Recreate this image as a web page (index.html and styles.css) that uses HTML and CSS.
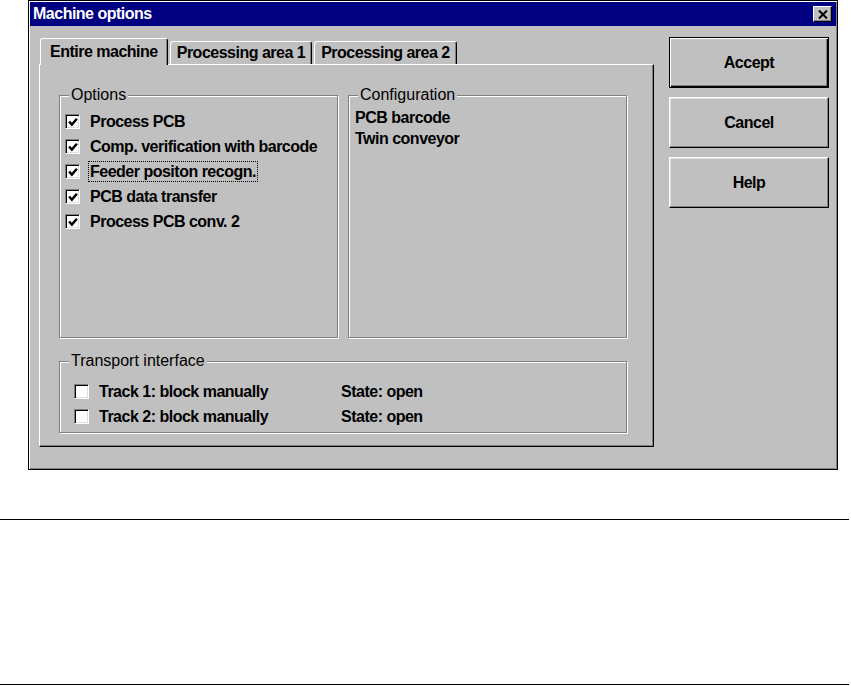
FILE: index.html
```html
<!DOCTYPE html>
<html lang="en">

<head>
    <meta charset="UTF-8">
    <title>Machine options</title>
    <link rel="stylesheet" href="styles.css">
</head>

<body>
    <div class="window">
        <!-- title bar -->
        <div class="titlebar">
            <span>Machine options</span>
            <div class="close">
                <svg width="10" height="9" viewBox="0 0 10 9">
                    <path d="M1 0.5 L9 8.5 M9 0.5 L1 8.5" stroke="#000" stroke-width="2" fill="none" />
                </svg>
            </div>
        </div>

        <div class="content">
            <div class="tabarea">
                <div class="tabs">
                    <div class="tab active">Entire machine</div>
                    <div class="tab">Processing area 1</div>
                    <div class="tab">Processing area 2</div>
                </div>
                <div class="panel">
                    <div class="groups">
                        <!-- options -->
                        <div class="group options">
                            <span class="group-title">Options</span>
                            <div class="check-row">
                                <span class="box"><svg class="tick" viewBox="0 0 9 9"><path d="M1 4 L3.5 6.8 L8 1.5" /></svg></span>
                                <span>Process PCB</span>
                            </div>
                            <div class="check-row">
                                <span class="box"><svg class="tick" viewBox="0 0 9 9"><path d="M1 4 L3.5 6.8 L8 1.5" /></svg></span>
                                <span>Comp. verification with barcode</span>
                            </div>
                            <div class="check-row">
                                <span class="box"><svg class="tick" viewBox="0 0 9 9"><path d="M1 4 L3.5 6.8 L8 1.5" /></svg></span>
                                <span class="focus">Feeder positon recogn.</span>
                            </div>
                            <div class="check-row">
                                <span class="box"><svg class="tick" viewBox="0 0 9 9"><path d="M1 4 L3.5 6.8 L8 1.5" /></svg></span>
                                <span>PCB data transfer</span>
                            </div>
                            <div class="check-row">
                                <span class="box"><svg class="tick" viewBox="0 0 9 9"><path d="M1 4 L3.5 6.8 L8 1.5" /></svg></span>
                                <span>Process PCB conv. 2</span>
                            </div>
                        </div>
                        <!-- configuration -->
                        <div class="group config">
                            <span class="group-title">Configuration</span>
                            <div class="config-line">PCB barcode</div>
                            <div class="config-line">Twin conveyor</div>
                        </div>
                    </div>
                    <!-- transport -->
                    <div class="group transport">
                        <span class="group-title">Transport interface</span>
                        <div class="track-row">
                            <div class="check-row"><span class="box"></span><span>Track 1: block manually</span></div>
                            <span>State: open</span>
                        </div>
                        <div class="track-row">
                            <div class="check-row"><span class="box"></span><span>Track 2: block manually</span></div>
                            <span>State: open</span>
                        </div>
                    </div>
                </div>
            </div>

            <div class="buttons">
                <button class="btn default">Accept</button>
                <button class="btn">Cancel</button>
                <button class="btn">Help</button>
            </div>
        </div>
    </div>

    <div class="doc-rule"></div>
</body>

</html>
```

FILE: styles.css
```css
body {
    margin: 0;
    background: #fff;
    font-family: "Liberation Sans", Arial, sans-serif;
    color: #000;
}

.window {
    margin-left: 28px;
    width: 810px;
    height: 470px;
    box-sizing: border-box;
    padding: 1px;
    background: #c0c0c0;
    border: 1px solid #000;
    box-shadow: inset 1px 1px 0 #fff, inset -1px -1px 0 #808080;
    display: flex;
    flex-direction: column;
}

.titlebar {
    height: 24px;
    background: #000080;
    color: #fff;
    font-size: 16px;
    font-weight: bold;
    letter-spacing: -0.5px;
    display: flex;
    align-items: center;
    justify-content: space-between;
    padding: 0 4px 0 3px;
}

.close {
    width: 19px;
    height: 16px;
    box-sizing: border-box;
    background: #c0c0c0;
    border-top: 1px solid #fff;
    border-left: 1px solid #fff;
    border-right: 1px solid #000;
    border-bottom: 1px solid #000;
    box-shadow: inset -1px -1px 0 #808080;
    display: flex;
    align-items: center;
    justify-content: center;
}

.content {
    display: flex;
    gap: 15px;
    padding: 12px 7px 0 9px;
}

.tabarea {
    width: 615px;
}

.tabs {
    display: flex;
    align-items: flex-end;
    gap: 2px;
    height: 26px;
    padding-left: 1px;
}

.tab {
    height: 23px;
    box-sizing: border-box;
    padding: 0 6px;
    border-top: 1px solid #fff;
    border-left: 1px solid #fff;
    border-right: 1px solid #000;
    border-radius: 3px 3px 0 0;
    box-shadow: inset -1px 0 0 #808080;
    font-size: 16px;
    font-weight: bold;
    letter-spacing: -0.5px;
    line-height: 22px;
}

.tab.active {
    position: relative;
    z-index: 1;
    height: 27px;
    margin-bottom: -1px;
    padding: 0 9px;
    background: #c0c0c0;
    line-height: 25px;
}

.panel {
    height: 383px;
    box-sizing: border-box;
    padding: 30px 26px 0 19px;
    border-top: 1px solid #fff;
    border-left: 1px solid #fff;
    border-right: 1px solid #000;
    border-bottom: 1px solid #000;
    box-shadow: inset -1px -1px 0 #808080;
}

.groups {
    display: grid;
    grid-template-columns: 1fr 1fr;
    gap: 10px;
    height: 243px;
}

.group {
    position: relative;
    box-sizing: border-box;
    border: 1px solid #808080;
    box-shadow: 1px 1px 0 #fff, inset 1px 1px 0 #fff;
}

.group-title {
    position: absolute;
    top: -10px;
    left: 9px;
    padding: 0 2px;
    background: #c0c0c0;
    font-size: 16px;
    line-height: 18px;
}

.options {
    padding: 13px 0 0 5px;
}

.check-row {
    display: flex;
    align-items: center;
    gap: 10px;
    height: 25px;
    font-size: 16px;
    font-weight: bold;
    letter-spacing: -0.5px;
}

.box {
    flex-shrink: 0;
    width: 15px;
    height: 15px;
    box-sizing: border-box;
    background: #fff;
    border-top: 1px solid #808080;
    border-left: 1px solid #808080;
    border-right: 1px solid #fff;
    border-bottom: 1px solid #fff;
    box-shadow: inset 1px 1px 0 #000, inset -1px -1px 0 #dfdfdf;
    display: flex;
    align-items: center;
    justify-content: center;
}

.tick {
    width: 10px;
    height: 10px;
    margin: 1px 0 0 1px;
}

.tick path {
    fill: none;
    stroke: #000;
    stroke-width: 2.2;
}

.focus {
    outline: 1px dotted #000;
    padding: 1px 1px 0;
    margin-left: -1px;
}

.config {
    padding: 11px 6px;
}

.config-line {
    font-size: 16px;
    font-weight: bold;
    letter-spacing: -0.5px;
    line-height: 21px;
}

.transport {
    margin-top: 23px;
    height: 72px;
    padding: 17px 0 0 14px;
}

.track-row {
    display: grid;
    grid-template-columns: 267px auto;
    align-items: center;
    height: 25px;
    font-size: 16px;
    font-weight: bold;
    letter-spacing: -0.5px;
}

.buttons {
    display: flex;
    flex-direction: column;
    gap: 9px;
    width: 160px;
    margin-top: -1px;
}

.btn {
    height: 51px;
    box-sizing: border-box;
    padding: 0;
    background: #c0c0c0;
    border-top: 1px solid #fff;
    border-left: 1px solid #fff;
    border-right: 1px solid #000;
    border-bottom: 1px solid #000;
    box-shadow: inset -1px -1px 0 #808080, inset 1px 1px 0 #dfdfdf;
    font-family: inherit;
    font-size: 16px;
    font-weight: bold;
    letter-spacing: -0.5px;
    color: #000;
}

.btn.default {
    border: 1px solid #000;
    box-shadow: inset 1px 1px 0 #fff, inset -1px -1px 0 #000, inset -2px -2px 0 #808080;
}

.doc-rule {
    width: 849px;
    height: 164px;
    margin-top: 49px;
    border-top: 1px solid #000;
    border-bottom: 1px solid #000;
}
```
